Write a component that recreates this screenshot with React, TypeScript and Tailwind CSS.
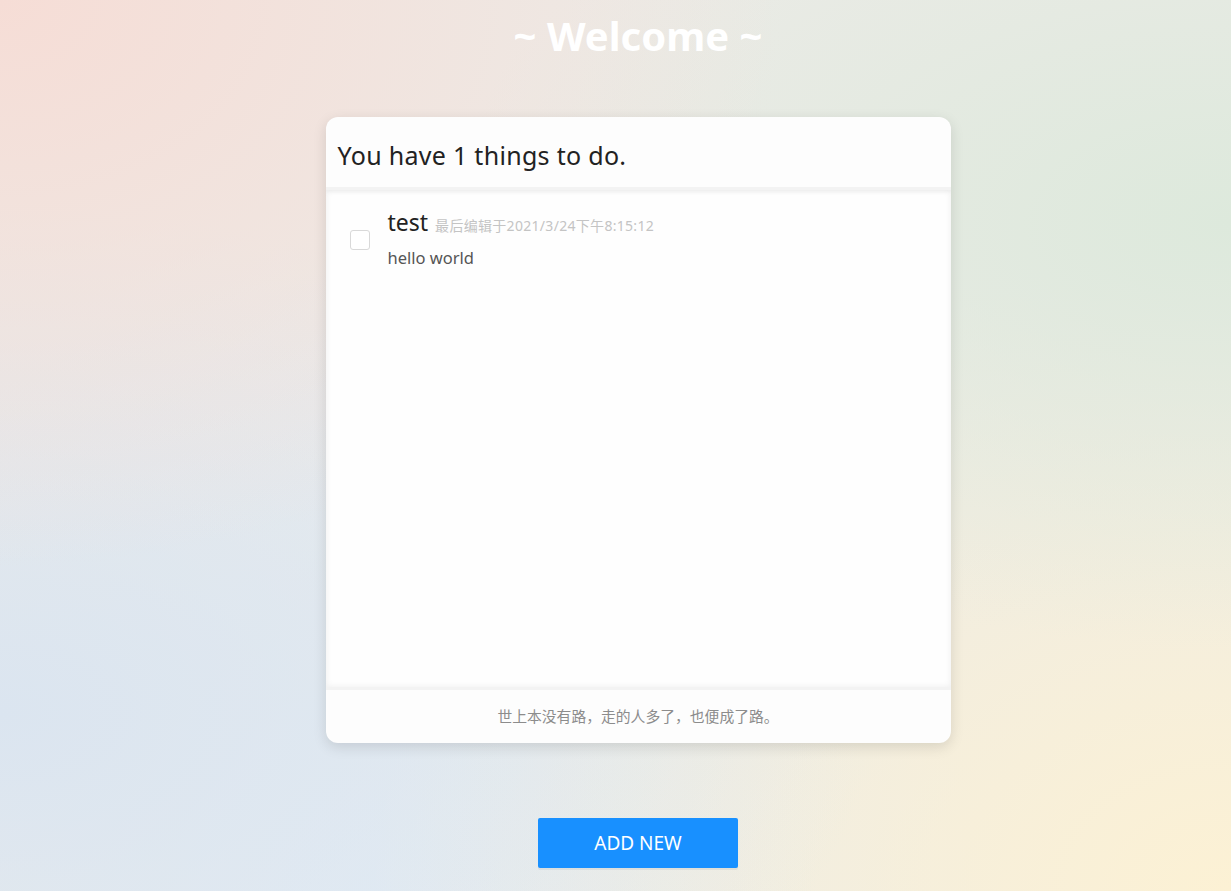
import React from "react";

export default function App() {
  return (
    <div
      className="relative w-full h-[891px] overflow-hidden flex flex-col items-center pl-[45px] bg-[#ecebe7] bg-[radial-gradient(ellipse_at_0%_0%,#f6ddd6_0%,rgba(246,221,214,0)_45%),radial-gradient(ellipse_at_100%_25%,#dde9dc_0%,rgba(221,233,220,0)_45%),radial-gradient(ellipse_at_0%_80%,#dbe5f0_0%,rgba(219,229,240,0)_50%),radial-gradient(ellipse_at_100%_100%,#fcf1d4_0%,rgba(252,241,212,0)_50%),radial-gradient(ellipse_at_30%_100%,#e3ecf4_0%,rgba(227,236,244,0)_50%)]"
      style={{ fontFamily: '"Noto Sans", "Open Sans", "Noto Sans CJK SC", sans-serif' }}
    >
      <h1 className="mt-[9px] text-[40px] leading-[54px] font-bold text-white tracking-[0px]">~ Welcome ~</h1>

      <div className="mt-[54px] w-[625px] h-[626px] rounded-[12px] bg-[#fdfdfd] shadow-[0_4px_14px_rgba(0,0,0,0.12)] flex flex-col overflow-hidden">
        <div className="h-[73px] shrink-0 flex items-center px-[12px] pt-[6px] shadow-[0_2px_4px_rgba(0,0,0,0.04)] border-b-[3px] border-[#f3f3f3] relative z-10">
          <span className="text-[25px] text-[#222] leading-none tracking-[0.3px]">You have 1 things to do.</span>
        </div>
        <div className="flex-1 bg-[#fefefe] shadow-[inset_0_0_6px_rgba(0,0,0,0.07)] px-[24px] pt-[17px]">
          <div className="flex items-start">
            <div className="mt-[23px] w-[20px] h-[20px] rounded-[3px] border border-[#d9d9d9] bg-white shrink-0" />
            <div className="ml-[18px] flex flex-col">
              <div className="flex items-baseline">
                <span className="text-[23px] leading-[30px] text-[#222]">test</span>
                <span className="ml-[7px] text-[14px] text-[#c4c4c4] tracking-[0.3px]">最后编辑于2021/3/24下午8:15:12</span>
              </div>
              <span className="mt-[10px] text-[16.5px] leading-[22px] text-[#555]">hello world</span>
            </div>
          </div>
        </div>
        <div className="h-[56px] shrink-0 border-t-[3px] border-[#f3f3f3] flex items-center justify-center">
          <span className="text-[14.8px] text-[#8c8c8c]">世上本没有路，走的人多了，也便成了路。</span>
        </div>
      </div>

      <button className="mt-[75px] w-[200px] h-[50px] rounded-[2px] bg-[#1890ff] text-white text-[19px] shadow-[0_2px_0_rgba(0,0,0,0.05)]">
        ADD NEW
      </button>
    </div>
  );
}
